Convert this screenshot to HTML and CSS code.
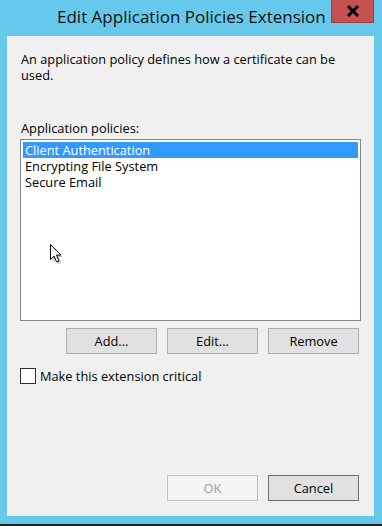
FILE: index.html
```html
<!DOCTYPE html>
<html lang="en">
<head>
  <meta charset="UTF-8" />
  <title>Edit Application Policies Extension</title>
  <link rel="stylesheet" href="styles.css">
</head>
<body>
  <div class="window">
    <!-- Title bar -->
    <div class="titlebar">
      <span class="title">Edit Application Policies Extension</span>
      <div class="close-btn">
        <svg width="16" height="14" viewBox="0 0 16 14">
          <path d="M3 2 L13 12 M13 2 L3 12" stroke="#000" stroke-width="3" />
        </svg>
      </div>
    </div>

    <!-- Dialog body -->
    <div class="client">
      <p class="desc">An application policy defines how a certificate can be used.</p>

      <p class="label">Application policies:</p>
      <div class="listbox">
        <div class="item selected">Client Authentication</div>
        <div class="item">Encrypting File System</div>
        <div class="item">Secure Email</div>

        <svg class="cursor" width="14" height="22" viewBox="0 0 14 22">
          <path d="M2.5 2.5 L2.5 17.5 L6 14 L8.5 20 L11 19 L8.5 13 L13 13 Z" fill="#000" opacity="0.25" />
          <path d="M0.5 0.5 L0.5 15.5 L4 12 L6.5 18 L9 17 L6.5 11 L11 11 Z" fill="#fff" stroke="#000" stroke-width="1" />
        </svg>
      </div>

      <div class="list-buttons">
        <button class="btn">Add...</button>
        <button class="btn">Edit...</button>
        <button class="btn">Remove</button>
      </div>

      <label class="check">
        <span class="box"></span>
        <span>Make this extension critical</span>
      </label>

      <div class="dialog-buttons">
        <button class="btn disabled">OK</button>
        <button class="btn default">Cancel</button>
      </div>
    </div>
  </div>
</body>
</html>
```

FILE: styles.css
```css
body {
  margin: 0;
  background-color: #fff;
  font-family: "Open Sans", "Noto Sans", sans-serif;
  font-size: 12.8px;
  color: #000;
}
.window {
  width: 382px;
  height: 526px;
  box-sizing: border-box;
  background-color: #66c8ea;
  padding: 0 8px 8px 7px;
  border-bottom: 2px solid #222;
  display: flex;
  flex-direction: column;
}
.titlebar {
  height: 36px;
  flex-shrink: 0;
  position: relative;
}
.title {
  position: absolute;
  left: 50px;
  top: 5px;
  font-size: 17px;
  color: #111;
}
.close-btn {
  position: absolute;
  right: 0;
  top: 0;
  width: 41px;
  height: 22px;
  background-color: #c75050;
  border: 1px solid #9a3d3d;
  border-top: none;
  display: flex;
  justify-content: center;
  align-items: center;
}
.client {
  flex: 1;
  background-color: #f0f0f0;
  padding: 0 13px;
  display: flex;
  flex-direction: column;
}
.desc {
  margin: 15px 0 0 1px;
  line-height: 16px;
  width: 330px;
}
.label {
  margin: 37px 0 0 1px;
  line-height: 16px;
}
.listbox {
  position: relative;
  margin-top: 3px;
  height: 176px;
  background-color: #fff;
  border: 1px solid #828790;
  padding: 2px;
}
.item {
  height: 16px;
  line-height: 16px;
  padding-left: 2px;
}
.item.selected {
  background-color: #3399ff;
  color: #fff;
}
.cursor {
  position: absolute;
  left: 29px;
  top: 104px;
}
.list-buttons,
.dialog-buttons {
  display: flex;
  justify-content: flex-end;
  gap: 10px;
  padding-right: 2px;
}
.list-buttons {
  margin-top: 7px;
}
.dialog-buttons {
  margin-top: auto;
  margin-bottom: 15px;
}
.btn {
  width: 91px;
  height: 26px;
  font-family: inherit;
  font-size: 12.8px;
  background-color: #e1e1e1;
  border: 1px solid #adadad;
  color: #000;
  padding: 0;
}
.btn.disabled {
  background-color: #f4f4f4;
  border-color: #bfbfbf;
  color: #a0a0a0;
}
.btn.default {
  border-color: #707070;
  background-color: #e1e1e1;
}
.check {
  display: flex;
  align-items: center;
  gap: 4px;
  margin-top: 14px;
  line-height: 16px;
}
.box {
  width: 14px;
  height: 14px;
  background-color: #fff;
  border: 1px solid #333;
}
```
